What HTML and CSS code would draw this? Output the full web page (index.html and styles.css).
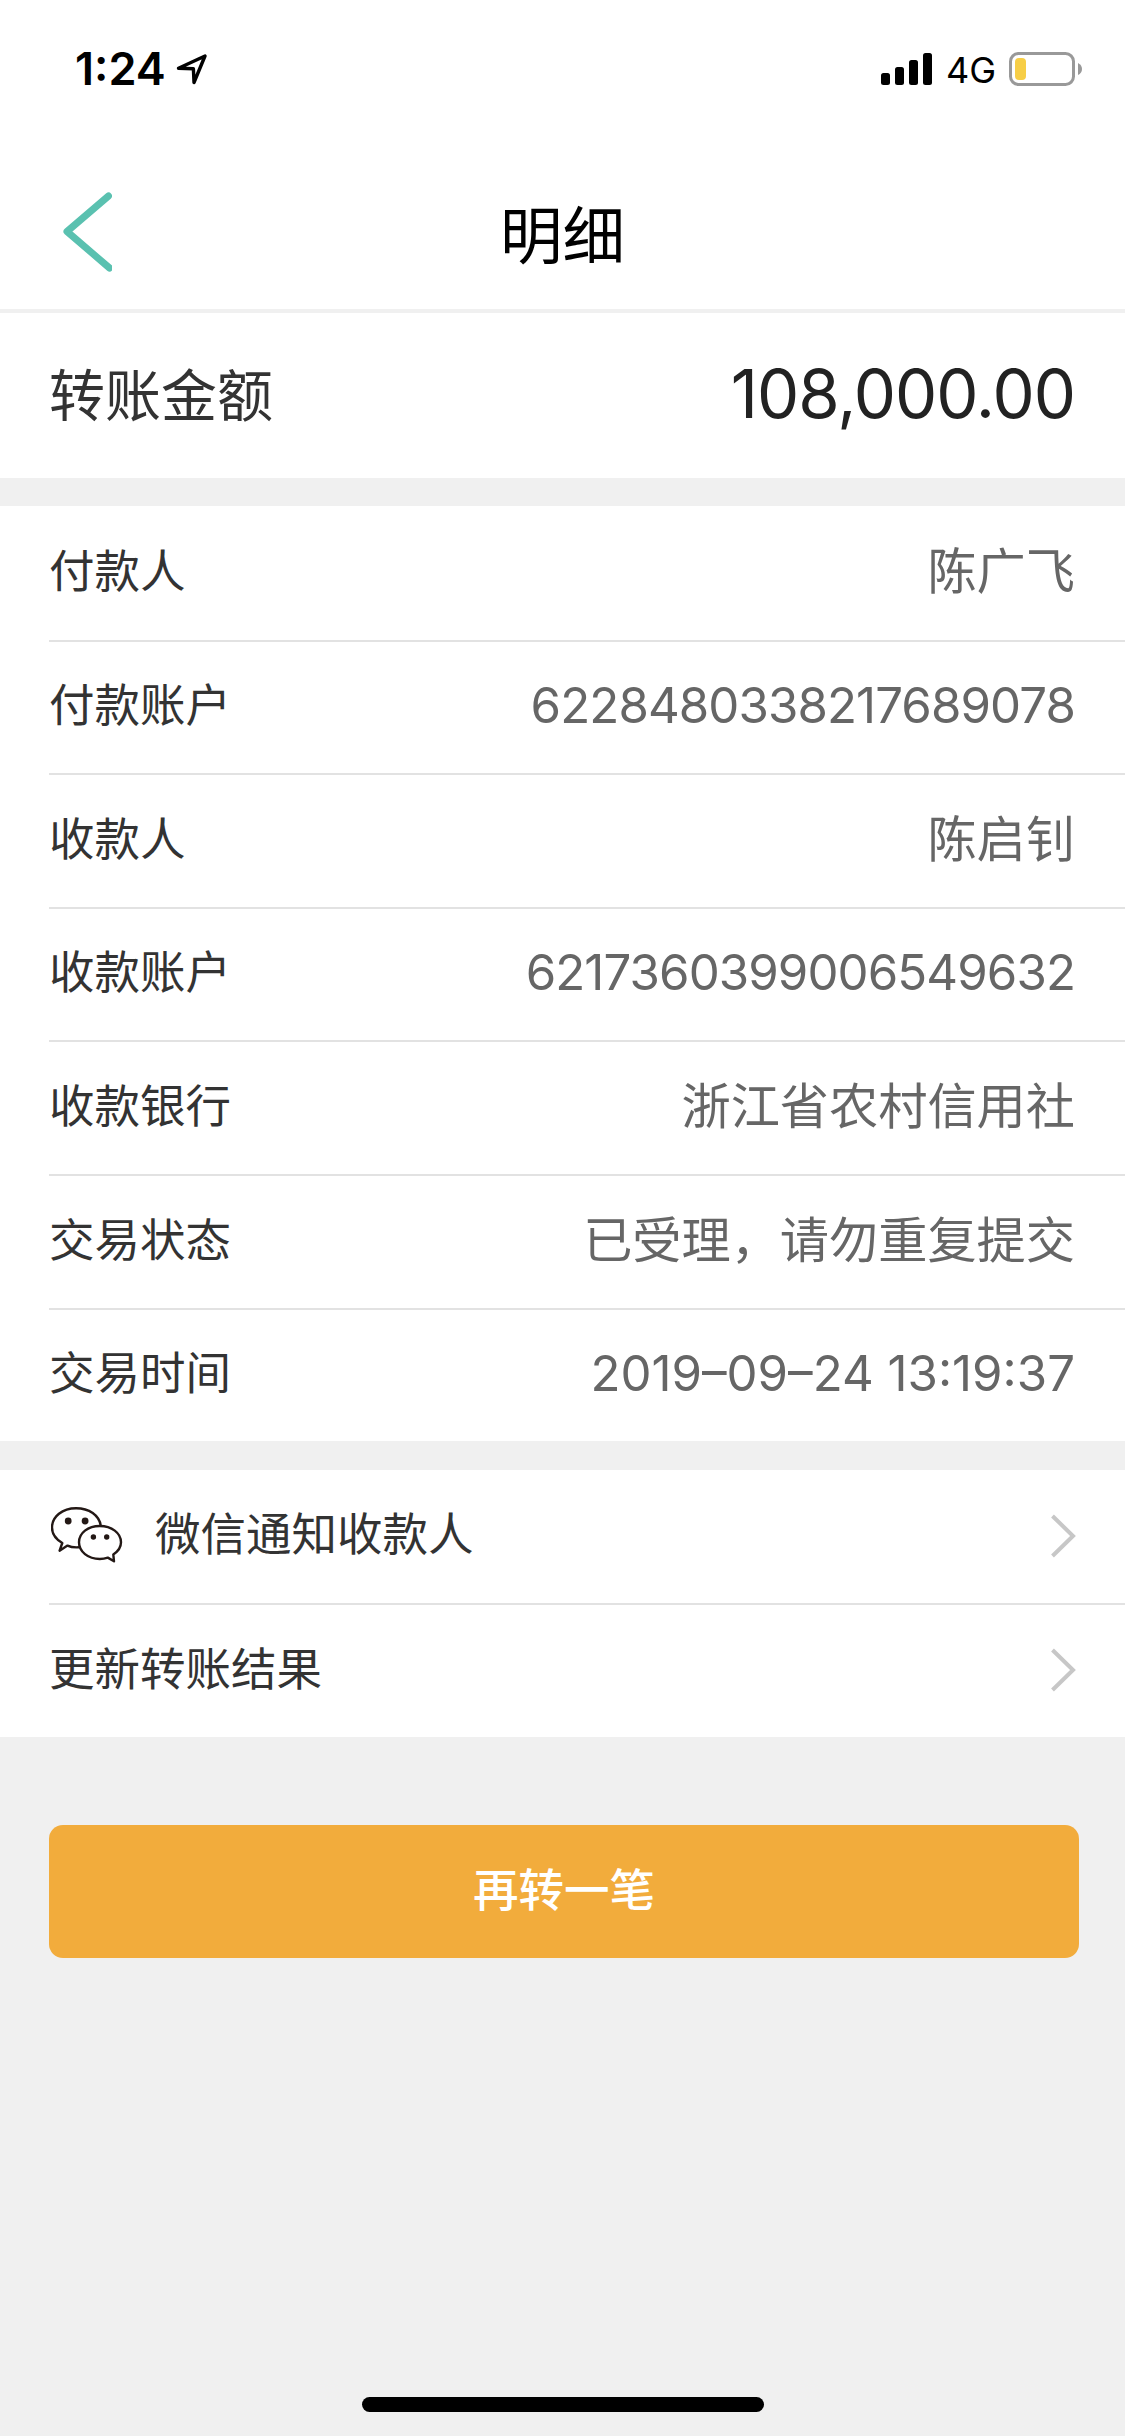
FILE: index.html
```html
<!DOCTYPE html>
<html lang="zh-CN">
<head>
    <meta charset="UTF-8">
    <meta name="viewport" content="width=device-width, initial-scale=1.0">
    <title>明细</title>
    <link rel="stylesheet" href="styles.css">
</head>
<body>
    <header class="header">
        <div class="status-bar">
            <div class="status-left">
                <span class="time">1:24</span>
                <svg class="location" width="32" height="32" viewBox="0 0 32 32">
                    <path d="M2.5 15.2 L29 3 L18 29.5 L17.4 15.8 Z"/>
                </svg>
            </div>
            <div class="status-right">
                <svg class="signal" width="52" height="34" viewBox="0 0 52 34">
                    <rect x="0" y="21" width="9" height="12" rx="2.5"/>
                    <rect x="14" y="15" width="9" height="18" rx="2.5"/>
                    <rect x="28" y="8" width="9" height="25" rx="2.5"/>
                    <rect x="42" y="1" width="9" height="32" rx="2.5"/>
                </svg>
                <span class="network">4G</span>
                <svg class="battery" width="74" height="34" viewBox="0 0 74 34">
                    <rect x="1.5" y="1.5" width="63" height="31" rx="8" fill="none" stroke="#999" stroke-width="3"/>
                    <rect x="6" y="6" width="11" height="22" rx="4" fill="#f7ce46"/>
                    <path d="M69 11 Q73 13 73 17 Q73 21 69 23 Z" fill="#999"/>
                </svg>
            </div>
        </div>
        <nav class="nav-bar">
            <svg class="back" width="50" height="84" viewBox="0 0 50 84">
                <path d="M46.5 7 L5 42.5 L47.5 79"/>
            </svg>
            <h1 class="title">明细</h1>
        </nav>
    </header>

    <section class="amount">
        <span class="amount-label">转账金额</span>
        <span class="amount-value">108,000.00</span>
    </section>

    <section class="details">
        <div class="row">
            <span class="label">付款人</span>
            <span class="value">陈广飞</span>
        </div>
        <div class="row">
            <span class="label">付款账户</span>
            <span class="value number">6228480338217689078</span>
        </div>
        <div class="row">
            <span class="label">收款人</span>
            <span class="value">陈启钊</span>
        </div>
        <div class="row">
            <span class="label">收款账户</span>
            <span class="value number">6217360399006549632</span>
        </div>
        <div class="row">
            <span class="label">收款银行</span>
            <span class="value">浙江省农村信用社</span>
        </div>
        <div class="row">
            <span class="label">交易状态</span>
            <span class="value">已受理，请勿重复提交</span>
        </div>
        <div class="row">
            <span class="label">交易时间</span>
            <span class="value number date">2019–09–24 13:19:37</span>
        </div>
    </section>

    <section class="actions">
        <a class="row">
            <svg class="wechat" width="72" height="57" viewBox="0 0 72 57">
                <path d="M28 40.3 Q21 40.8 16.5 38.6 L8.6 43.7 L11.3 36 C4.5 32 1 26.5 1 20.5 C1 9.5 11.5 1.2 25.1 1.2 C38 1.2 48.3 8.3 49.8 18.8"/>
                <path d="M48.8 19 C60.5 19 70 26 70 35.3 C70 40.2 67 44.5 62.3 47.4 L63 54.3 L56.8 50.6 C54.3 51.5 51.6 52 48.8 52 C37 52 28 44.6 28 35.3 C28 26 37 19 48.8 19 Z"/>
                <circle cx="17.2" cy="14" r="3.4"/>
                <circle cx="34.1" cy="14" r="3.4"/>
                <circle cx="42.4" cy="30" r="2.7"/>
                <circle cx="55.7" cy="30" r="2.7"/>
            </svg>
            <span class="label">微信通知收款人</span>
            <svg class="arrow" width="26" height="44" viewBox="0 0 26 44">
                <path d="M2.5 2 L23 22 L2.5 42"/>
            </svg>
        </a>
        <a class="row">
            <span class="label">更新转账结果</span>
            <svg class="arrow" width="26" height="44" viewBox="0 0 26 44">
                <path d="M2.5 2 L23 22 L2.5 42"/>
            </svg>
        </a>
    </section>

    <button class="submit">再转一笔</button>

    <div class="home-indicator"></div>
</body>
</html>
```

FILE: styles.css
```css
* {
    box-sizing: border-box;
}

body {
    font-family: Inter, 'Noto Sans CJK SC', sans-serif;
    background-color: #f0f0f0;
    margin: 0;
    height: 2436px;
    display: flex;
    flex-direction: column;
    color: #333;
}

svg {
    display: block;
    flex: none;
}

.header {
    height: 313px;
    background: #fff;
    border-bottom: 4px solid #f0f0f0;
}

.status-bar {
    height: 138px;
    padding: 0 42px 0 75px;
    display: flex;
    justify-content: space-between;
    align-items: center;
    color: #000;
}

.status-left,
.status-right {
    display: flex;
    align-items: center;
}

.time {
    font-size: 45px;
    font-weight: 600;
    line-height: 54px;
}

.location {
    margin-left: 10px;
    fill: none;
    stroke: #000;
    stroke-width: 3.4;
    stroke-linejoin: round;
}

.network {
    font-size: 36px;
    line-height: 44px;
    margin: 2px 13px 0 13px;
}

.nav-bar {
    height: 171px;
    display: grid;
    grid-template-columns: 1fr auto 1fr;
    align-items: center;
    padding: 0 62px;
}

.back {
    margin-top: 15px;
    fill: none;
    stroke: #5ac1b0;
    stroke-width: 7;
    stroke-linecap: round;
    stroke-linejoin: round;
}

.title {
    margin: 24px 0 0;
    font-size: 62.5px;
    font-weight: 400;
    line-height: 80px;
    color: #000;
}

.amount {
    height: 165px;
    background: #fff;
    padding: 0 50px 4px 49px;
    display: flex;
    justify-content: space-between;
    align-items: center;
}

.amount-label {
    font-size: 56px;
    margin-bottom: 5px;
}

.amount-value {
    font-size: 67px;
    color: #222;
    letter-spacing: -1px;
}

.details,
.actions {
    display: grid;
    background: #fff;
    padding-left: 49px;
}

.details {
    margin-top: 28px;
    grid-template-rows: 136px 133px 134px 133px 134px 134px 131px;
}

.actions {
    margin-top: 29px;
    grid-template-rows: 135px 132px;
}

.row {
    display: flex;
    align-items: center;
    padding: 0 50px 3px 0;
    border-bottom: 2px solid #e2e2e2;
}

.row:last-child {
    border-bottom: none;
}

.label {
    font-size: 45.5px;
    line-height: 66px;
}

.value {
    margin: 0 0 2px auto;
    font-size: 49.2px;
    line-height: 70px;
    color: #666;
}

.number {
    letter-spacing: -0.9px;
}

.date {
    letter-spacing: 0;
}

.wechat {
    margin: 0 32px 0 2px;
    fill: none;
    stroke: #231815;
    stroke-width: 2.4;
    stroke-linejoin: round;
}

.wechat circle {
    fill: #231815;
    stroke: none;
}

.arrow {
    margin: 1px -1px 0 auto;
    fill: none;
    stroke: #c7c7c7;
    stroke-width: 4;
}

.submit {
    margin: 88px 46px 0 49px;
    height: 133px;
    padding: 0 0 9px;
    border: none;
    border-radius: 14px;
    background: #f2ac3c;
    color: #fff;
    font-family: inherit;
    font-size: 45.5px;
    font-weight: 500;
}

.home-indicator {
    width: 402px;
    height: 15px;
    margin: auto auto 24px;
    border-radius: 8px;
    background: #000;
}
```
